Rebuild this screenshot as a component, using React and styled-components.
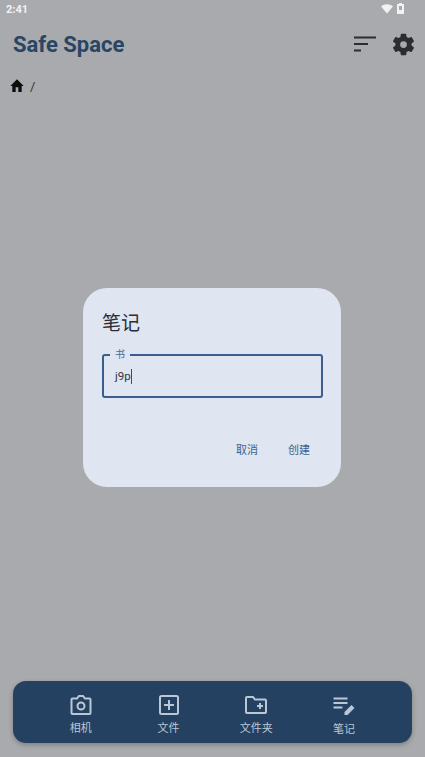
import React from 'react';
import styled, { createGlobalStyle } from 'styled-components';

const GlobalStyle = createGlobalStyle`
	html, body {
		margin: 0;
		padding: 0;
		background: #a9aaad;
	}
	* {
		box-sizing: border-box;
	}
`;

const FONT = `Roboto, "Noto Sans CJK SC", sans-serif`;

const Screen = styled.div`
	position: relative;
	width: 425px;
	height: 757px;
	overflow: hidden;
	display: flex;
	flex-direction: column;
	background: #a9aaad;
	font-family: ${FONT};
`;

const StatusBar = styled.div`
	height: 19px;
	padding: 0 21px 0 6px;
	display: flex;
	align-items: center;
	justify-content: space-between;
	color: #f2f2f3;
	font-size: 11px;
	font-weight: 700;
`;

const StatusIcons = styled.div`
	display: flex;
	align-items: center;
	gap: 4px;
	margin-bottom: 2px;
`;

const AppBar = styled.div`
	height: 50px;
	padding: 0 8px 0 13px;
	display: flex;
	align-items: center;
	justify-content: space-between;
`;

const Title = styled.div`
	color: #274564;
	font-size: 22px;
	font-weight: 700;
`;

const AppBarActions = styled.div`
	display: flex;
	align-items: center;
	gap: 14px;
`;

const Breadcrumb = styled.div`
	padding: 9px 0 0 9px;
	display: flex;
	align-items: center;
	gap: 5px;
	color: #333;
	font-size: 13px;
`;

const Overlay = styled.div`
	position: absolute;
	inset: 0;
	display: flex;
	justify-content: center;
	padding: 288px 1px 0 0;
`;

const Dialog = styled.div`
	width: 258px;
	height: 199px;
	padding: 23px 18px 0 19px;
	border-radius: 24px;
	background: #dfe5f1;
	display: flex;
	flex-direction: column;
`;

const DialogTitle = styled.div`
	color: #2a2d33;
	font-size: 19px;
	line-height: 26px;
`;

const Field = styled.div`
	position: relative;
	margin-top: 17px;
	height: 44px;
	padding: 0 11px;
	display: flex;
	align-items: center;
	border: 2px solid #3a5f8e;
	border-radius: 3px;
	color: #33363b;
	font-size: 11.5px;
`;

const FieldLabel = styled.span`
	position: absolute;
	top: -8px;
	left: 6px;
	padding: 0 5px;
	background: #dfe5f1;
	color: #4a6a92;
	font-size: 10px;
	line-height: 13px;
`;

const Caret = styled.span`
	display: inline-block;
	width: 1px;
	height: 15px;
	background: #33507a;
`;

const DialogActions = styled.div`
	margin-top: 45px;
	padding-right: 13px;
	display: flex;
	justify-content: flex-end;
	gap: 30px;
`;

const DialogButton = styled.span`
	color: #41618c;
	font-size: 11px;
	line-height: 16px;
`;

const BottomBar = styled.div`
	position: absolute;
	left: 13px;
	right: 13px;
	bottom: 14px;
	height: 62px;
	padding: 0 24px;
	display: grid;
	grid-template-columns: repeat(4, 87.7px);
	border-radius: 13px;
	background: #244162;
	box-shadow: 0 2px 5px rgba(0, 0, 0, 0.25);
`;

const NavItem = styled.div`
	padding-top: ${(p) => p.$top}px;
	display: flex;
	flex-direction: column;
	align-items: center;
	color: #bcc7d6;
	font-size: 11px;
	line-height: 14px;
`;

const NavLabel = styled.span`
	margin-top: ${(p) => p.$gap}px;
`;

const WifiIcon = () => (
	<svg width="12" height="10" viewBox="0 0 12 10">
		<path d="M0 2.5C3.5-.6 8.5-.6 12 2.5L6 9.5z" fill="#f2f2f3" />
	</svg>
);

const BatteryIcon = () => (
	<svg width="7" height="11" viewBox="0 0 7 11">
		<path d="M2 0h3v1h2v10H0V1h2z" fill="#f2f2f3" />
		<rect x="2" y="3" width="3" height="4" fill="#a9aaad" />
	</svg>
);

const SortIcon = () => (
	<svg width="22" height="16" viewBox="0 0 22 16">
		<path d="M0 1.500h22M0 8h14M0 14.500h7" stroke="#2b2d31" strokeWidth="2" fill="none" />
	</svg>
);

const GearIcon = () => (
	<svg width="27" height="27" viewBox="0 0 24 24">
		<path
			fill="#2b2d31"
			fillRule="evenodd"
			d="M19.14 12.94c.04-.3.06-.61.06-.94 0-.32-.02-.64-.07-.94l2.03-1.58a.49.49 0 0 0 .12-.61l-1.92-3.32a.49.49 0 0 0-.59-.22l-2.39.96c-.5-.38-1.03-.7-1.62-.94l-.36-2.54a.48.48 0 0 0-.48-.41h-3.84c-.24 0-.43.17-.47.41l-.36 2.54c-.59.24-1.13.57-1.62.94l-2.39-.96a.48.48 0 0 0-.59.22L2.74 8.87c-.12.21-.08.47.12.61l2.03 1.58c-.05.3-.09.63-.09.94s.02.64.07.94l-2.03 1.58a.49.49 0 0 0-.12.61l1.92 3.32c.12.22.37.29.59.22l2.39-.96c.5.38 1.03.7 1.62.94l.36 2.54c.05.24.24.41.48.41h3.84c.24 0 .44-.17.47-.41l.36-2.54c.59-.24 1.13-.56 1.62-.94l2.39.96c.22.08.47 0 .59-.22l1.92-3.32a.47.47 0 0 0-.12-.61l-2.01-1.58zM12 15a3 3 0 1 1 0-6 3 3 0 0 1 0 6z"
		/>
	</svg>
);

const HomeIcon = () => (
	<svg width="16" height="16" viewBox="0 0 24 24">
		<path fill="#0d0d0d" d="M10 21v-7h4v7h5v-9h3L12 2 2 12h3v9z" />
	</svg>
);

const CameraIcon = () => (
	<svg width="24" height="24" viewBox="0 0 24 24" fill="none" stroke="#bcc7d6" strokeWidth="2">
		<path d="M3.500 5.500h4.500l2-2.500h4l2 2.500h4.500a1 1 0 0 1 1 1V20a1 1 0 0 1-1 1H3.500a1 1 0 0 1-1-1V6.500a1 1 0 0 1 1-1z" />
		<circle cx="12" cy="13" r="3.500" />
	</svg>
);

const FileAddIcon = () => (
	<svg width="24" height="24" viewBox="0 0 24 24" fill="none" stroke="#bcc7d6" strokeWidth="2">
		<rect x="3" y="3" width="18" height="18" rx="1.500" />
		<path d="M12 7v10M7 12h10" />
	</svg>
);

const FolderAddIcon = () => (
	<svg width="24" height="24" viewBox="0 0 24 24" fill="none" stroke="#bcc7d6" strokeWidth="2">
		<path d="M3 4h6l2 2.500h10a1 1 0 0 1 1 1V19a1 1 0 0 1-1 1H3a1 1 0 0 1-1-1V5a1 1 0 0 1 1-1z" />
		<path d="M16 10v6M13 13h6" />
	</svg>
);

const NoteIcon = () => (
	<svg width="24" height="24" viewBox="0 0 24 24">
		<path d="M1.500 3.500h14M1.500 8h14M1.500 12.500h9" stroke="#bcc7d6" strokeWidth="2" fill="none" />
		<path d="M12.500 20v-3l7-7 3 3-7 7z" fill="#bcc7d6" />
	</svg>
);

const navItems = [
	{ label: '相机', icon: <CameraIcon />, top: 12, gap: 5 },
	{ label: '文件', icon: <FileAddIcon />, top: 12, gap: 5 },
	{ label: '文件夹', icon: <FolderAddIcon />, top: 12, gap: 5 },
	{ label: '笔记', icon: <NoteIcon />, top: 14, gap: 4 },
];

const App = () => (
	<Screen>
		<GlobalStyle />
		<StatusBar>
			<span>2:41</span>
			<StatusIcons>
				<WifiIcon />
				<BatteryIcon />
			</StatusIcons>
		</StatusBar>
		<AppBar>
			<Title>Safe Space</Title>
			<AppBarActions>
				<SortIcon />
				<GearIcon />
			</AppBarActions>
		</AppBar>
		<Breadcrumb>
			<HomeIcon />
			<span>/</span>
		</Breadcrumb>
		<Overlay>
			<Dialog>
				<DialogTitle>笔记</DialogTitle>
				<Field>
					<FieldLabel>书</FieldLabel>
					<span>j9p</span>
					<Caret />
				</Field>
				<DialogActions>
					<DialogButton>取消</DialogButton>
					<DialogButton>创建</DialogButton>
				</DialogActions>
			</Dialog>
		</Overlay>
		<BottomBar>
			{navItems.map((item) => (
				<NavItem key={item.label} $top={item.top}>
					{item.icon}
					<NavLabel $gap={item.gap}>{item.label}</NavLabel>
				</NavItem>
			))}
		</BottomBar>
	</Screen>
);

export default App;
